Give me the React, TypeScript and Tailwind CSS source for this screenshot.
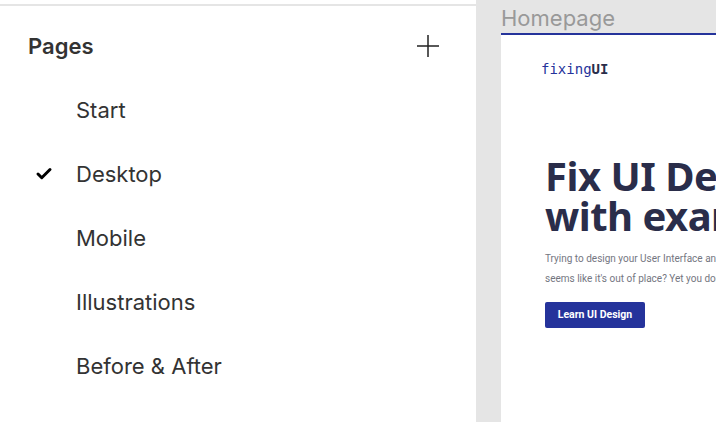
import { Check } from 'lucide-react';

const pages = ['Start', 'Desktop', 'Mobile', 'Illustrations', 'Before & After'];

const App = () => {
  return (
    <div className="flex h-[422px] w-[716px] overflow-hidden bg-[#e5e5e5]">
      <aside className="w-[476px] shrink-0 bg-white pt-[4px] font-['Inter',sans-serif]">
        <div className="h-[2px] bg-[#e5e5e5]" />
        <div className="flex h-[72px] items-center justify-between pl-[28px] pr-[36px] pt-[8px]">
          <h2 className="text-[22px] font-semibold text-[#333333]">Pages</h2>
          <svg width="24" height="24" viewBox="0 0 24 24" stroke="#222222" strokeWidth="1.5" fill="none">
            <path d="M12 1v22M1 12h22" />
          </svg>
        </div>
        <ul>
          {pages.map((page) => (
            <li key={page} className="flex h-[64px] items-center text-[22px] text-[#333333]">
              <span className="flex w-[76px] justify-start pl-[35px]">
                {page === 'Desktop' && <Check size={18} strokeWidth={4} className="text-black" />}
              </span>
              {page}
            </li>
          ))}
        </ul>
      </aside>

      <main className="flex min-w-0 flex-1 flex-col pl-[25px]">
        <div className="h-[33px] shrink-0 font-['Inter',sans-serif] text-[22px] leading-[36px] text-[#999999]">
          Homepage
        </div>
        <div className="flex-1 overflow-hidden whitespace-nowrap border-t-[2px] border-[#25339b] bg-white pl-[44px] font-['Roboto',sans-serif]">
          <div className="ml-[-4px] mt-[24px] h-[20px] font-['DejaVu_Sans_Mono',monospace] text-[14px] leading-[20px] text-[#25339b]">
            fixing<span className="font-bold text-[#2a2d4a]">UI</span>
          </div>
          <h1 className="mt-[77px] font-['Noto_Sans',sans-serif] text-[40px] font-bold leading-[40px] tracking-[-0.5px] text-[#2a2d4a]">
            Fix UI Design
            <br />
            with examples
          </h1>
          <p className="mt-[13px] text-[10px] leading-[20px] text-[#74767f]">
            Trying to design your User Interface and
            <br />
            seems like it's out of place? Yet you don't know
          </p>
          <button className="mt-[13px] h-[26px] w-[100px] rounded-[2px] bg-[#25339b] text-[10.5px] font-bold text-white">
            Learn UI Design
          </button>
        </div>
      </main>
    </div>
  );
};

export default App;
